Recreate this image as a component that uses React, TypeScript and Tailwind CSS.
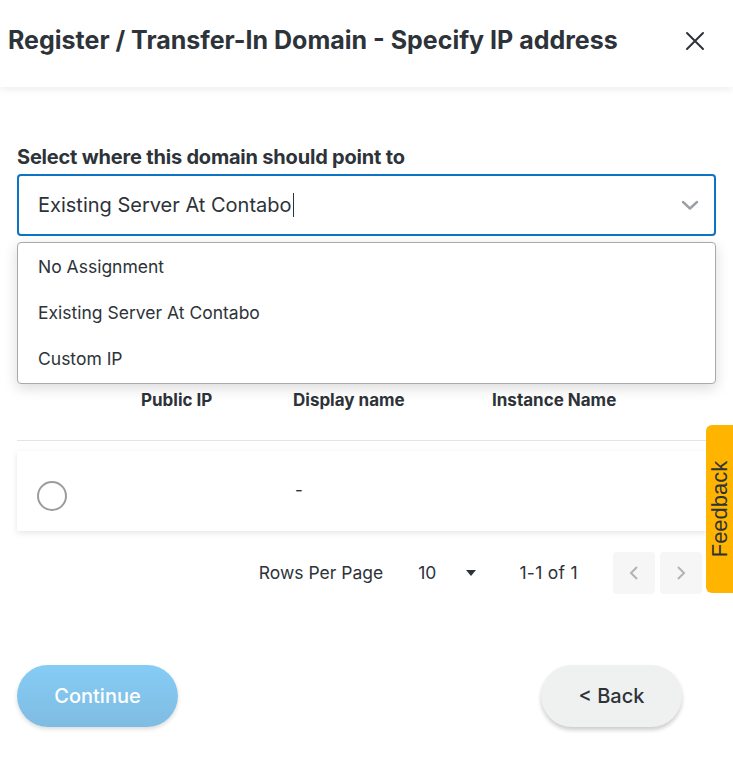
import React from "react";

export default function App() {
  return (
    <div className="relative w-[733px] h-[773px] bg-white overflow-hidden text-[#2d3339]" style={{ fontFamily: "Inter, 'Noto Sans', sans-serif" }}>
      {/* Header */}
      <div className="h-[87px] flex items-center justify-between pl-[8px] pr-[28px] pb-[5px] shadow-[0_2px_8px_rgba(0,0,0,0.08)] relative z-10">
        <h1 className="text-[25px] font-bold text-[#2d3339]">Register / Transfer-In Domain - Specify IP address</h1>
        <svg width="20" height="20" viewBox="0 0 20 20" className="text-[#2d3339]">
          <path d="M2 2 L18 18 M18 2 L2 18" stroke="currentColor" strokeWidth="2" strokeLinecap="round" />
        </svg>
      </div>

      <div className="px-[17px] pt-[58px]">
        <label className="block text-[20px] font-bold text-[#2d3339] leading-[24px] tracking-[-0.2px]">Select where this domain should point to</label>
        <div className="relative mt-[5px]">
          <div className="h-[62px] border-2 border-[#0b74c4] rounded-[4px] flex items-center justify-between pl-[19px] pr-[15px]">
            <span className="text-[20px] text-[#2d3339] flex items-center">Existing Server At Contabo<span className="inline-block w-[1px] h-[24px] bg-[#2d3339] ml-[1px]" /></span>
            <svg width="18" height="12" viewBox="0 0 18 12">
              <path d="M2 3 L9 9.5 L16 3" stroke="#9aa0a6" strokeWidth="2.4" fill="none" strokeLinecap="round" strokeLinejoin="round" />
            </svg>
          </div>
          {/* dropdown menu */}
          <div className="absolute left-0 right-0 top-[68px] z-20 bg-white border border-[#a7a9ab] rounded-[4px] shadow-[0_4px_14px_rgba(0,0,0,0.15)] py-[1px]">
            {["No Assignment", "Existing Server At Contabo", "Custom IP"].map((t) => (
              <div key={t} className="h-[46px] flex items-center pl-[20px] text-[17.5px] text-[#2d3339]">{t}</div>
            ))}
          </div>
        </div>

        {/* table */}
        <div className="mt-[155px] flex items-center h-[20px] text-[17px] font-bold text-[#2d3339]">
          <div className="w-[124px]" />
          <div className="w-[152px]">Public IP</div>
          <div className="w-[199px]">Display name</div>
          <div>Instance Name</div>
        </div>
        <div className="mt-[29px] border-t border-[#e3e4e5]" />
        <div className="mt-[10px] h-[80px] bg-white shadow-[0_2px_6px_rgba(0,0,0,0.1)] flex items-center pl-[20px] w-[690px]">
          <div className="mt-[10px] w-[30px] h-[30px] rounded-full border-2 border-[#9a9c9e]" />
          <div className="ml-[228px] text-[17px]">-</div>
        </div>

        {/* pagination */}
        <div className="mt-[21px] flex items-center justify-end pr-[14px] h-[42px] text-[17.5px] text-[#2d3339]">
          <span>Rows Per Page</span>
          <span className="ml-[35px]">10</span>
          <svg width="10" height="6" viewBox="0 0 10 6" className="ml-[30px]"><path d="M0 0 L10 0 L5 6 Z" fill="#2d3339" /></svg>
          <span className="ml-[43px] tracking-[0.3px]">1-1 of 1</span>
          <div className="ml-[35px] w-[42px] h-[42px] rounded-[4px] bg-[#f6f6f6] flex items-center justify-center">
            <svg width="10" height="16" viewBox="0 0 10 16"><path d="M8 2 L2 8 L8 14" stroke="#b3b3b3" strokeWidth="2" fill="none" /></svg>
          </div>
          <div className="ml-[5px] w-[42px] h-[42px] rounded-[4px] bg-[#f6f6f6] flex items-center justify-center">
            <svg width="10" height="16" viewBox="0 0 10 16"><path d="M2 2 L8 8 L2 14" stroke="#b3b3b3" strokeWidth="2" fill="none" /></svg>
          </div>
        </div>

        {/* buttons */}
        <div className="mt-[71px] flex items-center justify-between pr-[34px]">
          <button className="w-[161px] h-[62px] rounded-full bg-gradient-to-b from-[#85ccf5] to-[#80bce2] text-white text-[20px] font-medium shadow-[0_2px_4px_rgba(0,0,0,0.15)]">Continue</button>
          <button className="w-[141px] h-[62px] rounded-full bg-[#eff1f1] text-[#2d3339] text-[20px] font-medium shadow-[0_3px_4px_rgba(0,0,0,0.2)]">&lt; Back</button>
        </div>
      </div>

      {/* Feedback tab */}
      <div className="absolute right-0 top-[425px] w-[27px] h-[168px] bg-[#ffb400] rounded-l-[6px] flex items-center justify-center">
        <span className="-rotate-90 whitespace-nowrap text-[22px] leading-none text-[#2d3339] translate-x-[1px]" style={{ fontFamily: "'Liberation Sans', Arial, sans-serif" }}>Feedback</span>
      </div>
    </div>
  );
}
